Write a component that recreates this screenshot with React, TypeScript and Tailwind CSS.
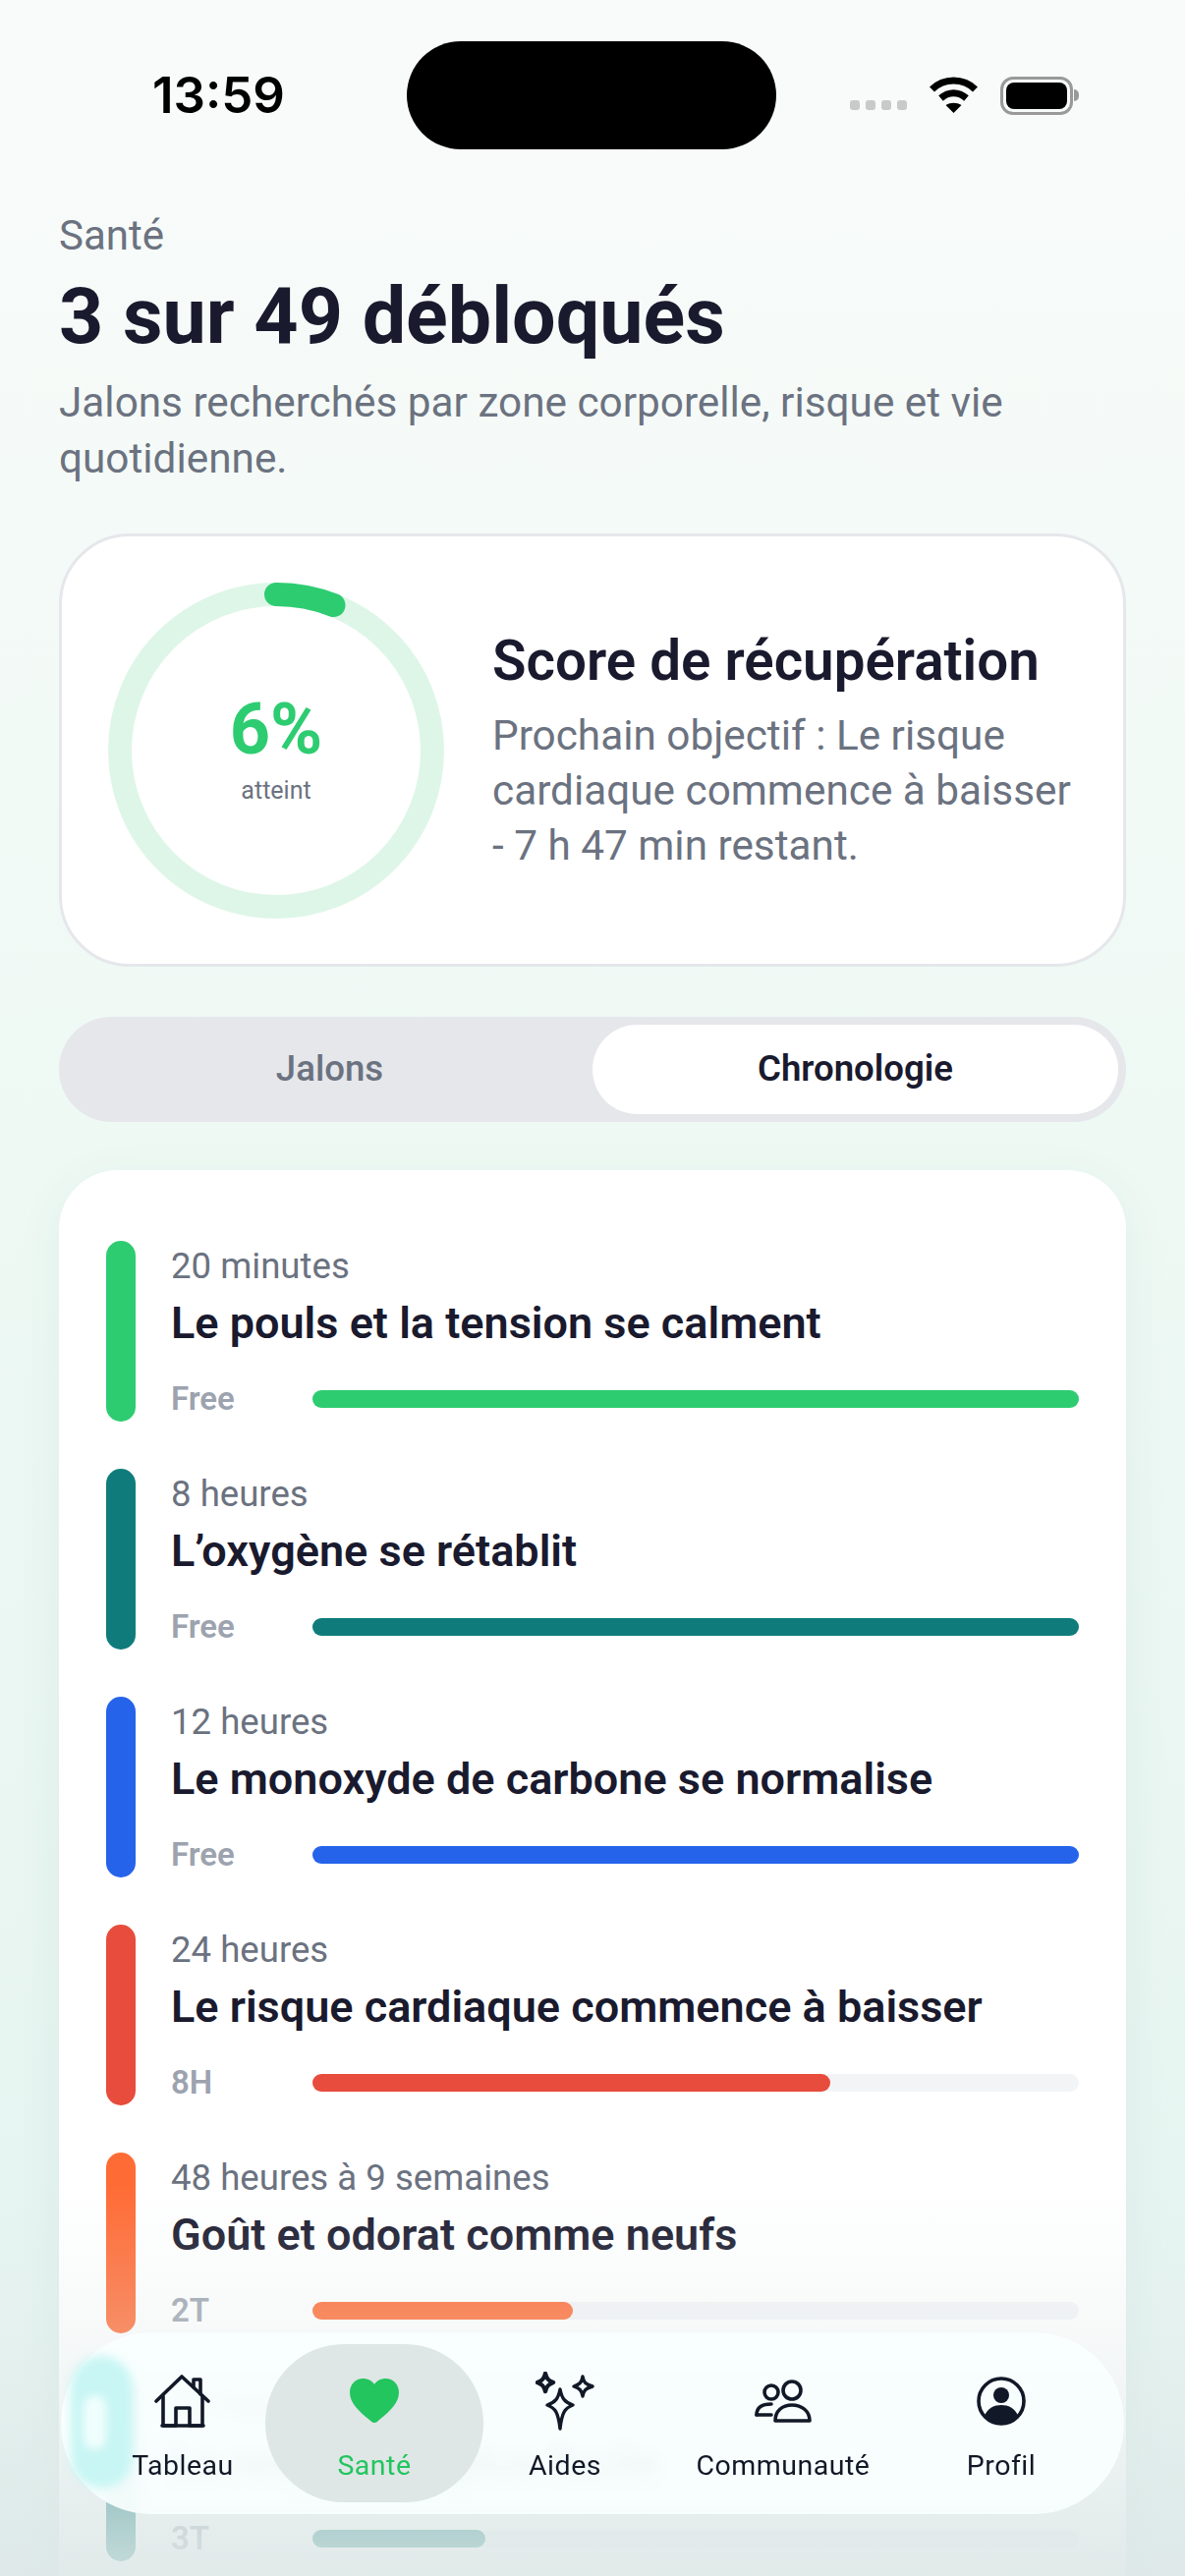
const font = { fontFamily: "Roboto, 'Liberation Sans', sans-serif" };

const jalons = [
  { temps: "20 minutes", titre: "Le pouls et la tension se calment", label: "Free", couleur: "bg-[#2ecc71]", largeur: "w-full" },
  { temps: "8 heures", titre: "L’oxygène se rétablit", label: "Free", couleur: "bg-[#0f7c7b]", largeur: "w-full" },
  { temps: "12 heures", titre: "Le monoxyde de carbone se normalise", label: "Free", couleur: "bg-[#2563eb]", largeur: "w-full" },
  { temps: "24 heures", titre: "Le risque cardiaque commence à baisser", label: "8H", couleur: "bg-[#e74c3c]", largeur: "w-[67.5%]" },
  { temps: "48 heures à 9 semaines", titre: "Goût et odorat comme neufs", label: "2T", couleur: "bg-[#ff6b35]", largeur: "w-[34%]" },
  { temps: "72 heures", titre: "La respiration plus facile", label: "3T", couleur: "bg-[#0f7c7b]", largeur: "w-[22.5%]" },
];

function Ligne({ temps, titre, label, couleur, largeur }: (typeof jalons)[number]) {
  return (
    <div className="flex gap-[36px] h-[184px]">
      <div className={`w-[30px] h-full rounded-full ${couleur}`}></div>
      <div className="flex-1 flex flex-col">
        <div className="text-[36.6px] leading-[44px] text-[#6b7280] mt-[4px]">{temps}</div>
        <div className="text-[45px] leading-[56px] font-semibold text-[#1a1a2e] mt-[8px]">{titre}</div>
        <div className="flex items-center mt-[27px]">
          <span className="w-[144px] text-[33px] leading-[44px] font-semibold text-[#9ca3af]">{label}</span>
          <div className="flex-1 h-[18px] rounded-full bg-[#f3f4f6]">
            <div className={`h-full rounded-full ${couleur} ${largeur}`}></div>
          </div>
        </div>
      </div>
    </div>
  );
}

function IconeMaison() {
  return (
    <svg width="58" height="54" viewBox="0 0 58 54" fill="none" stroke="#111827" strokeWidth="3.6" strokeLinecap="round" strokeLinejoin="round">
      <path d="M2 27 28 2l27 25" />
      <path d="M9 22v30h13V34h14v18h13V22" />
      <path d="M8 52h42" />
      <path d="M40 13V5h7v15" />
    </svg>
  );
}

function IconeCoeur() {
  return (
    <svg width="50" height="46" viewBox="0 0 50 46" fill="#22c55e">
      <path d="M25 45C23 45 22 44 20 42 9 33 0 25 0 14 0 6 6 0 13.500 0 18 0 22.500 2 25 6 27.500 2 32 0 36.500 0 44 0 50 6 50 14 50 25 41 33 30 42 28 44 27 45 25 45Z" />
    </svg>
  );
}

function IconeEtoiles() {
  return (
    <svg width="60" height="60" viewBox="0 0 60 60" fill="none" stroke="#111827" strokeWidth="3.4" strokeLinejoin="round">
      <path d="M25 18c2 10 5 13 13 16-8 3-11 7-13 24-2-17-5-21-13-24 8-3 11-6 13-16Z" />
      <path d="M10 2c1 5 3 7 8 9-5 2-7 4-8 9-1-5-3-7-8-9 5-2 7-4 8-9Z" strokeWidth="4.4" />
      <path d="M48 5c1 6 3 8 10 10-7 2-9 4-10 10-1-6-3-8-9-10 6-2 8-4 9-10Z" />
    </svg>
  );
}

function IconeGroupe() {
  return (
    <svg width="58" height="44" viewBox="0 0 58 44" fill="none" stroke="#111827" strokeWidth="3.6" strokeLinecap="round" strokeLinejoin="round">
      <circle cx="17" cy="13" r="7" />
      <circle cx="38" cy="11" r="9" />
      <path d="M2 36c0-7 5-11 15-11" />
      <path d="M2 36h15" />
      <path d="M21 42c0-10 7-16 17-16s18 6 18 16H21Z" />
    </svg>
  );
}

function IconeProfil() {
  return (
    <svg width="50" height="50" viewBox="0 0 50 50">
      <circle cx="25" cy="25" r="23" fill="none" stroke="#111827" strokeWidth="3.6" />
      <circle cx="25" cy="19" r="8" fill="#111827" />
      <path d="M8 40c3-8 10-11 17-11s14 3 17 11c-4 5-10 9-17 9S12 45 8 40Z" fill="#111827" />
    </svg>
  );
}

const onglets = [
  { nom: "Tableau", largeur: "w-[168px]", icone: <IconeMaison /> },
  { nom: "Santé", largeur: "w-[222px]", icone: <IconeCoeur />, actif: true },
  { nom: "Aides", largeur: "w-[166px]", icone: <IconeEtoiles /> },
  { nom: "Communauté", largeur: "w-[278px]", icone: <IconeGroupe /> },
  { nom: "Profil", largeur: "w-[166px]", icone: <IconeProfil /> },
];

export default function App() {
  return (
    <div
      style={font}
      className="relative w-[1206px] h-[2622px] overflow-hidden bg-gradient-to-b from-[#f9fbfa] via-[#eef9f4] via-45% to-[#e4f3f0]"
    >
      {/* barre d'état */}
      <div className="flex items-center h-[110px] mt-[42px]">
        <span className="w-[414px] pl-[155px] text-[51px] font-semibold text-black" style={{ fontFamily: "Inter, sans-serif" }}>
          13:59
        </span>
        <div className="w-[376px] h-[110px] rounded-[55px] bg-black"></div>
        <div className="flex items-center pl-[75px]">
          <div className="flex gap-[6px] mt-[20px]">
            <span className="w-[10px] h-[10px] rounded-[3px] bg-[#c9c9c9]"></span>
            <span className="w-[10px] h-[10px] rounded-[3px] bg-[#c9c9c9]"></span>
            <span className="w-[10px] h-[10px] rounded-[3px] bg-[#c9c9c9]"></span>
            <span className="w-[10px] h-[10px] rounded-[3px] bg-[#c9c9c9]"></span>
          </div>
          <svg className="ml-[22px]" width="51" height="38" viewBox="0 0 50 38" fill="none" stroke="#000" strokeWidth="7">
            <path d="M3 13C15 1 35 1 47 13" />
            <path d="M12 22c8-7 18-7 26 0" />
            <path d="M25 37l-8-8c5-3 11-3 16 0l-8 8Z" fill="#000" stroke="none" />
          </svg>
          <div className="ml-[22px] w-[74px] h-[39px] rounded-[13px] border-[3px] border-[#999] p-[3px]">
            <div className="w-full h-full rounded-[8px] bg-black"></div>
          </div>
          <div className="w-[5px] h-[12px] rounded-r-full bg-[#999] ml-[1px]"></div>
        </div>
      </div>

      {/* en-tête */}
      <div className="px-[60px] pt-[62px]">
        <div className="text-[42px] leading-[52px] text-[#6b7280]">Santé</div>
        <h1 className="text-[79px] leading-[92px] font-bold text-[#1a1a2e] mt-[10px]">3 sur 49 débloqués</h1>
        <p className="text-[42.3px] leading-[57px] text-[#6b7280] mt-[13px]">
          Jalons recherchés par zone corporelle, risque et vie quotidienne.
        </p>

        {/* score */}
        <div className="flex items-center mt-[48px] h-[441px] rounded-[72px] bg-white border-[3px] border-[#e5e7eb] pl-[47px] pr-[36px]">
          <div className="relative w-[342px] h-[342px] shrink-0">
            <svg width="342" height="342" viewBox="0 0 342 342" fill="none">
              <circle cx="171" cy="171" r="159" stroke="#def6e8" strokeWidth="24" />
              <path d="M171 12A159 159 0 0 1 229.500 23" stroke="#2ecc71" strokeWidth="24" strokeLinecap="round" />
            </svg>
            <div className="absolute inset-0 flex flex-col items-center justify-center">
              <span className="text-[72px] leading-[84px] font-bold text-[#2ecc71] mt-[-6px]">6%</span>
              <span className="text-[25px] leading-[32px] text-[#6b7280] mt-[4px]">atteint</span>
            </div>
          </div>
          <div className="ml-[49px]">
            <div className="text-[56.500px] leading-[68px] font-semibold text-[#1a1a2e]">Score de récupération</div>
            <p className="text-[42.3px] leading-[56px] text-[#6b7280] mt-[14px]">
              Prochain objectif : Le risque cardiaque commence à baisser - 7 h 47 min restant.
            </p>
          </div>
        </div>

        {/* onglets */}
        <div className="flex mt-[51px] h-[107px] rounded-full bg-[#e5e7eb] p-[8px]">
          <div className="flex-1 flex items-center justify-center text-[36.6px] font-medium text-[#6b7280]">Jalons</div>
          <div className="flex-1 flex items-center justify-center rounded-full bg-white text-[36.6px] font-semibold text-[#1a1a2e]">Chronologie</div>
        </div>

        {/* chronologie */}
        <div className="flex flex-col gap-[48px] mt-[49px] h-[1500px] rounded-[60px] bg-white pt-[72px] px-[48px] shadow-[0_10px_50px_rgba(20,80,70,0.06)]">
          {jalons.map((j) => (
            <Ligne key={j.temps} {...j} />
          ))}
        </div>
      </div>

      {/* fondu du bas */}
      <div className="absolute left-0 right-0 bottom-0 h-[400px] bg-gradient-to-b from-transparent via-[#e2ebea]/25 via-35% to-[#dde8e7]/90"></div>

      {/* navigation */}
      <nav className="absolute left-[62px] top-[2374px] w-[1082px] h-[185px] rounded-[92px] bg-[#f8fefe]/92 backdrop-blur-[7px] flex items-center pl-[40px]">
        <div className="absolute left-[10px] top-[24px] w-[63px] h-[135px] rounded-full bg-[#c8f6f4] blur-[5px]"></div>
        <div className="absolute left-[23px] top-[64px] w-[23px] h-[55px] rounded-full bg-[#f0fefd] blur-[4px]"></div>
        {onglets.map((o) => (
          <div
            key={o.nom}
            className={`relative flex flex-col items-center h-[161px] pt-[28px] ${o.largeur} ${o.actif ? "rounded-[80px] bg-[#dfe6e6]" : ""}`}
          >
            <div className="h-[60px] flex items-center justify-center">{o.icone}</div>
            <span className={`text-[28.500px] leading-[36px] mt-[18px] tracking-[0.5px] ${o.actif ? "text-[#22c55e]" : "text-[#111827]"}`}>
              {o.nom}
            </span>
          </div>
        ))}
      </nav>
    </div>
  );
}
